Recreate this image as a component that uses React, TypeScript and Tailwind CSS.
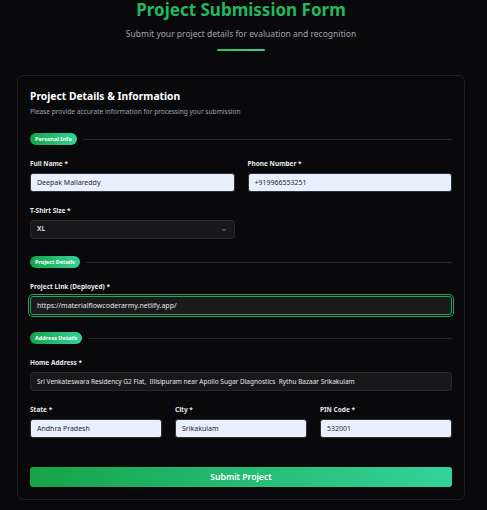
import { ChevronDown } from "lucide-react";

const font = { fontFamily: '"Noto Sans", "Open Sans", sans-serif' };

const Badge = ({ label }: { label: string }) => (
  <div className="flex h-[12px] w-full items-center gap-[6px]">
    <span className="flex h-[12px] items-center rounded-full bg-gradient-to-r from-[#16a34a] to-[#34d399] px-[5px] text-[5.5px] font-bold text-white">
      {label}
    </span>
    <div className="h-px flex-1 bg-[#27272a]" />
  </div>
);

const Label = ({ text }: { text: string }) => (
  <label className="block h-[10px] text-[6.5px] leading-[10px] font-bold text-[#e5e7eb]">
    {text}
  </label>
);

const LightInput = ({ label, value }: { label: string; value: string }) => (
  <div className="flex flex-col gap-[4px]">
    <Label text={label} />
    <input
      readOnly
      defaultValue={value}
      className="h-[19px] w-full rounded-[3px] border border-[#2f3138] bg-[#e8f0fe] px-[6px] text-[7px] text-[#1f2937] outline-none"
    />
  </div>
);

const App = () => {
  return (
    <div className="min-h-[510px] w-full overflow-hidden bg-[#09090b]" style={font}>
      <div className="w-[482px] px-[17px]">
        <div className="flex flex-col items-center">
          <h1 className="pt-px text-[17px] leading-[18px] font-bold text-[#22b760]">
            Project Submission Form
          </h1>
          <p className="mt-[8.5px] text-[8.5px] leading-[12px] text-[#a1a1aa]">
            Submit your project details for evaluation and recognition
          </p>
          <div className="mt-[9.5px] h-[2px] w-[48px] rounded-full bg-gradient-to-r from-[#22c55e] to-[#34d399]" />
        </div>

        <div className="mt-[24px] rounded-[6px] border border-[#1f1f23] bg-[#09090b] p-[12px]">
          <h2 className="text-[10.3px] leading-[16px] font-bold text-white">
            Project Details &amp; Information
          </h2>
          <p className="mt-[3px] text-[6.6px] leading-[10px] text-[#9ca3af]">
            Please provide accurate information for processing your submission
          </p>

          <div className="mt-[16px]">
            <Badge label="Personal Info" />
          </div>
          <div className="mt-[14px] grid grid-cols-2 gap-x-[13px]">
            <LightInput label="Full Name *" value="Deepak Mallareddy" />
            <LightInput label="Phone Number *" value="+919966553251" />
          </div>
          <div className="mt-[14px] grid grid-cols-2 gap-x-[13px]">
            <div className="flex flex-col gap-[4px]">
              <Label text="T-Shirt Size *" />
              <div className="flex h-[19px] w-full items-center justify-between rounded-[3px] border border-[#27272a] bg-[#18181b] pr-[7px] pl-[6px]">
                <span className="text-[7px] font-semibold text-[#e4e4e7]">XL</span>
                <ChevronDown className="h-[6px] w-[6px] text-[#9ca3af]" strokeWidth={3} />
              </div>
            </div>
          </div>

          <div className="mt-[17px]">
            <Badge label="Project Details" />
          </div>
          <div className="mt-[14px]">
            <div className="flex flex-col gap-[4px]">
              <Label text="Project Link (Deployed) *" />
              <input
                readOnly
                defaultValue="https://materialflowcoderarmy.netlify.app/"
                className="h-[19px] w-full rounded-[3px] border border-[#22a55a] bg-[#1a1a1d] px-[6px] text-[7px] text-[#e4e4e7] outline-none ring-1 ring-[#22a55a] ring-offset-1 ring-offset-[#09090b]"
              />
            </div>
          </div>

          <div className="mt-[17px]">
            <Badge label="Address Details" />
          </div>
          <div className="mt-[14px]">
            <div className="flex flex-col gap-[4px]">
              <Label text="Home Address *" />
              <input
                readOnly
                defaultValue="Sri Venkateswara Residency G2 Flat,  Illisipuram near Apollo Sugar Diagnostics  Rythu Bazaar Srikakulam"
                className="h-[19px] w-full rounded-[3px] border border-[#27272a] bg-[#18181b] px-[6px] text-[6.5px] text-[#e4e4e7] outline-none"
              />
            </div>
          </div>
          <div className="mt-[14px] grid grid-cols-3 gap-x-[13px]">
            <LightInput label="State *" value="Andhra Pradesh" />
            <LightInput label="City *" value="Srikakulam" />
            <LightInput label="PIN Code *" value="532001" />
          </div>

          <button className="mt-[29px] flex h-[20px] w-full items-center justify-center rounded-[3px] bg-gradient-to-r from-[#16a34a] to-[#34d399] text-[8.6px] font-semibold text-white">
            Submit Project
          </button>
        </div>
      </div>
    </div>
  );
};

export default App;
